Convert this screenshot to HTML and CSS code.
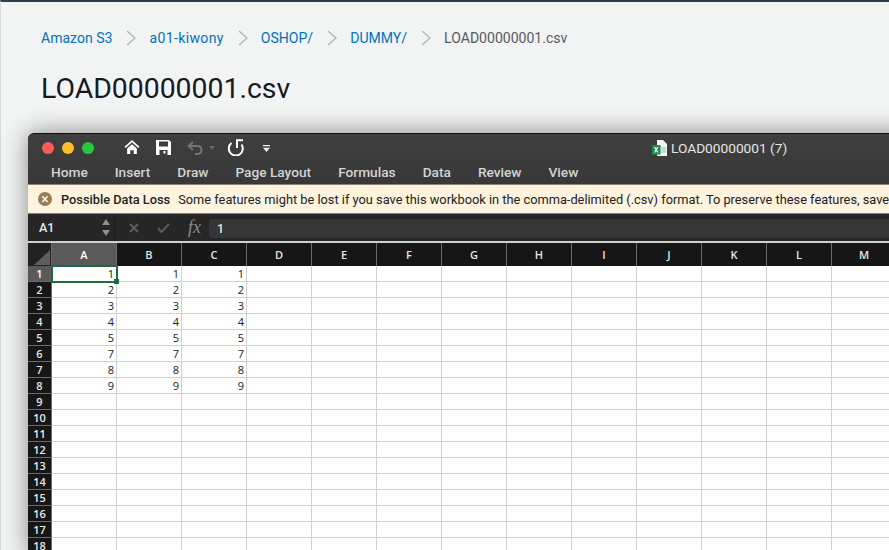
FILE: index.html
```html
<!DOCTYPE html>
<html lang="en">
<head>
  <meta charset="UTF-8" />
  <title>LOAD00000001.csv</title>
  <link rel="stylesheet" href="styles.css">
</head>
<body>

  <div class="page">
    <nav class="crumbs">
      <a href="#">Amazon S3</a>
      <svg class="sep" viewBox="0 0 10 16"><path d="M1 1l8 7-8 7"/></svg>
      <a class="bucket" href="#">a01-kiwony</a>
      <svg class="sep" viewBox="0 0 10 16"><path d="M1 1l8 7-8 7"/></svg>
      <a href="#">OSHOP/</a>
      <svg class="sep" viewBox="0 0 10 16"><path d="M1 1l8 7-8 7"/></svg>
      <a href="#">DUMMY/</a>
      <svg class="sep" viewBox="0 0 10 16"><path d="M1 1l8 7-8 7"/></svg>
      <span>LOAD00000001.csv</span>
    </nav>
    <h1>LOAD00000001.csv</h1>

    <div class="window">
      <div class="titlebar">
        <div class="lights">
          <i class="red"></i><i class="yellow"></i><i class="green"></i>
        </div>
        <div class="quick">
          <svg class="qa-home" viewBox="0 0 16 15"><path d="M8 0L0 7.200l1.200 1.300L8 2.400l6.800 6.100L16 7.200z"/><path d="M2.800 9.200L8 4.500l5.200 4.700V15H9.800v-4H6.200v4H2.800z"/></svg>
          <svg class="qa-save" viewBox="0 0 15 15"><path fill-rule="evenodd" d="M0 0h13l2 2v13H0zM3 1.500V6.500h9V1.500zM3.500 10V15h8v-5zM7.500 11h2v2.500h-2z"/></svg>
          <svg class="qa-undo" viewBox="0 0 16 14"><path d="M6 1L1.500 5 6 9M2 5h8c3 0 4.500 2 4.500 4s-1.500 4-4.500 4H8"/></svg>
          <svg class="qa-caret" viewBox="0 0 6 4"><path d="M0 0h6L3 4z"/></svg>
          <svg class="qa-redo" viewBox="0 0 17 17"><path d="M4.500 4A7 7 0 1 0 14.500 5.500M10 9V1.200M9 1.200h7"/></svg>
          <svg class="qa-more" viewBox="0 0 8 8"><path d="M0 0h8v1.500H0zM0 3h8L4 8z"/></svg>
        </div>
        <div class="doc">
          <svg class="doc-icon" viewBox="0 0 15 16"><path fill="#f4f4f4" d="M5 0h6l4 4v12H5z"/><path fill="#9fdcc0" d="M9 7h5v6H9z" opacity=".7"/><path fill="#1f8a50" d="M0 5h8.500v9.500H0z"/><path fill="#fff" d="M2 7h1.300L4.200 8.500 5.100 7h1.300L5 9.700l1.400 2.800H5.100L4.200 11l-.9 1.500H2l1.400-2.800z"/></svg>
          <span>LOAD00000001 (7)</span>
        </div>
        <ul class="tabs">
          <li>Home</li>
          <li>Insert</li>
          <li>Draw</li>
          <li>Page Layout</li>
          <li>Formulas</li>
          <li>Data</li>
          <li>Review</li>
          <li>View</li>
        </ul>
      </div>

      <div class="notice">
        <span class="notice-icon">&times;</span>
        <b>Possible Data Loss</b>
        <span>Some features might be lost if you save this workbook in the comma-delimited (.csv) format. To preserve these features, save</span>
      </div>

      <div class="formula">
        <div class="namebox">
          <span>A1</span>
          <div class="stepper"><i class="up"></i><i class="down"></i></div>
        </div>
        <div class="fx-btns">
          <svg viewBox="0 0 10 10"><path d="M1 1l8 8M9 1l-8 8"/></svg>
          <svg viewBox="0 0 13 10"><path d="M1 5l3.500 4L12 1"/></svg>
          <em>fx</em>
        </div>
        <div class="fx-input">1</div>
      </div>

      <table class="sheet">
        <thead>
          <tr>
            <th class="corner"><div class="corner-mark"></div></th>
            <th class="on">A</th><th>B</th><th>C</th><th>D</th><th>E</th><th>F</th><th>G</th><th>H</th><th>I</th><th>J</th><th>K</th><th>L</th><th>M</th>
          </tr>
        </thead>
        <tbody>
          <tr><th class="on">1</th><td class="active">1<i class="handle"></i></td><td>1</td><td>1</td><td></td><td></td><td></td><td></td><td></td><td></td><td></td><td></td><td></td><td></td></tr>
          <tr><th>2</th><td>2</td><td>2</td><td>2</td><td></td><td></td><td></td><td></td><td></td><td></td><td></td><td></td><td></td><td></td></tr>
          <tr><th>3</th><td>3</td><td>3</td><td>3</td><td></td><td></td><td></td><td></td><td></td><td></td><td></td><td></td><td></td><td></td></tr>
          <tr><th>4</th><td>4</td><td>4</td><td>4</td><td></td><td></td><td></td><td></td><td></td><td></td><td></td><td></td><td></td><td></td></tr>
          <tr><th>5</th><td>5</td><td>5</td><td>5</td><td></td><td></td><td></td><td></td><td></td><td></td><td></td><td></td><td></td><td></td></tr>
          <tr><th>6</th><td>7</td><td>7</td><td>7</td><td></td><td></td><td></td><td></td><td></td><td></td><td></td><td></td><td></td><td></td></tr>
          <tr><th>7</th><td>8</td><td>8</td><td>8</td><td></td><td></td><td></td><td></td><td></td><td></td><td></td><td></td><td></td><td></td></tr>
          <tr><th>8</th><td>9</td><td>9</td><td>9</td><td></td><td></td><td></td><td></td><td></td><td></td><td></td><td></td><td></td><td></td></tr>
          <tr><th>9</th><td></td><td></td><td></td><td></td><td></td><td></td><td></td><td></td><td></td><td></td><td></td><td></td><td></td></tr>
          <tr><th>10</th><td></td><td></td><td></td><td></td><td></td><td></td><td></td><td></td><td></td><td></td><td></td><td></td><td></td></tr>
          <tr><th>11</th><td></td><td></td><td></td><td></td><td></td><td></td><td></td><td></td><td></td><td></td><td></td><td></td><td></td></tr>
          <tr><th>12</th><td></td><td></td><td></td><td></td><td></td><td></td><td></td><td></td><td></td><td></td><td></td><td></td><td></td></tr>
          <tr><th>13</th><td></td><td></td><td></td><td></td><td></td><td></td><td></td><td></td><td></td><td></td><td></td><td></td><td></td></tr>
          <tr><th>14</th><td></td><td></td><td></td><td></td><td></td><td></td><td></td><td></td><td></td><td></td><td></td><td></td><td></td></tr>
          <tr><th>15</th><td></td><td></td><td></td><td></td><td></td><td></td><td></td><td></td><td></td><td></td><td></td><td></td><td></td></tr>
          <tr><th>16</th><td></td><td></td><td></td><td></td><td></td><td></td><td></td><td></td><td></td><td></td><td></td><td></td><td></td></tr>
          <tr><th>17</th><td></td><td></td><td></td><td></td><td></td><td></td><td></td><td></td><td></td><td></td><td></td><td></td><td></td></tr>
          <tr><th>18</th><td></td><td></td><td></td><td></td><td></td><td></td><td></td><td></td><td></td><td></td><td></td><td></td><td></td></tr>
        </tbody>
      </table>
    </div>
  </div>

</body>
</html>
```

FILE: styles.css
```css
html, body {
  margin: 0;
  padding: 0;
  height: 100%;
  overflow: hidden;
}

body {
  font-family: "Roboto", Arial, sans-serif;
  background: #f2f3f3;
}

.page {
  height: 548px;
  border-top: 2px solid #2f3d4c;
  border-left: 1px solid #d5dbdb;
  padding: 0 0 0 27px;
  overflow: hidden;
}

.crumbs {
  display: flex;
  align-items: center;
  height: 20px;
  margin: 26px 0 0 13px;
  font-size: 14.050px;
  color: #545b64;
}

.crumbs a {
  color: #0073bb;
  text-decoration: none;
}

.crumbs .bucket {
  letter-spacing: 0.35px;
}

.sep {
  width: 10px;
  height: 16px;
  margin: 0 13px 0 14px;
  fill: none;
  stroke: #aab7b8;
  stroke-width: 1.300;
}

h1 {
  margin: 21px 0 0 13px;
  height: 40px;
  font-size: 28.400px;
  line-height: 40px;
  font-weight: 400;
  color: #16191f;
}

.window {
  width: 900px;
  margin-top: 24px;
  border-radius: 6px 0 0 0;
  border-top: 1px solid #111;
  background: #383838;
  box-shadow: 0 0 24px rgba(0, 0, 0, 0.45);
  overflow: hidden;
  height: 420px;
}

/* title bar + ribbon tabs */
.titlebar {
  position: relative;
  height: 50px;
  background: linear-gradient(#3f3f3f, #383838);
}

.lights {
  position: absolute;
  top: 8px;
  left: 14px;
  display: flex;
  gap: 8px;
}

.lights i {
  width: 12px;
  height: 12px;
  border-radius: 50%;
}

.red { background: #fc5b57; }
.yellow { background: #fdbb2e; }
.green { background: #27c840; }

.quick svg {
  position: absolute;
}

.qa-home { left: 96px; top: 6px; width: 16px; height: 14px; fill: #fff; }
.qa-save { left: 128px; top: 6px; width: 15px; height: 15px; fill: #fff; }
.qa-undo { left: 159px; top: 7px; width: 16px; height: 14px; fill: none; stroke: #777; stroke-width: 1.800; }
.qa-caret { left: 181px; top: 12px; width: 6px; height: 4px; fill: #666; }
.qa-redo { left: 199px; top: 5px; width: 17px; height: 17px; fill: none; stroke: #fff; stroke-width: 2; }
.qa-more { left: 235px; top: 11px; width: 7px; height: 7px; fill: #eee; }

.doc {
  position: absolute;
  top: 6px;
  left: 624px;
  display: flex;
  align-items: center;
  gap: 4px;
  font-size: 13.700px;
  color: #e6e6e6;
}

.doc-icon {
  width: 15px;
  height: 16px;
}

.tabs {
  position: absolute;
  top: 30px;
  left: 23px;
  display: flex;
  gap: 27px;
  margin: 0;
  padding: 0;
  list-style: none;
  font-size: 13.700px;
  line-height: 16px;
  font-weight: 500;
  color: #d4d4d4;
}

/* yellow message bar */
.notice {
  display: flex;
  align-items: center;
  gap: 8px;
  height: 30px;
  padding-left: 10px;
  background: #fdf3df;
  border-top: 1px solid #8a8375;
  border-bottom: 1px solid #8a8375;
  box-sizing: border-box;
  font-size: 12.800px;
  color: #222;
  white-space: nowrap;
}

.notice b {
  font-weight: 500;
}

.notice-icon {
  flex: none;
  width: 14px;
  height: 14px;
  margin-right: 1px;
  border-radius: 50%;
  background: #9a7b4f;
  color: #fff;
  font-size: 14px;
  line-height: 14px;
  text-align: center;
}

/* formula bar */
.formula {
  display: flex;
  height: 27px;
  background: #262626;
  color: #e8e8e8;
  font-size: 12.500px;
  font-weight: 500;
}

.namebox {
  display: flex;
  align-items: center;
  justify-content: space-between;
  box-sizing: border-box;
  width: 87px;
  padding: 0 4px 0 11px;
  border-right: 1px solid #1c1c1c;
}

.stepper i {
  display: block;
  width: 0;
  height: 0;
  border-left: 4px solid transparent;
  border-right: 4px solid transparent;
}

.stepper .up { border-bottom: 6px solid #8f8f8f; margin-bottom: 5px; }
.stepper .down { border-top: 6px solid #8f8f8f; }

.fx-btns {
  display: flex;
  align-items: center;
  width: 94px;
  padding-left: 14px;
  box-sizing: border-box;
}

.fx-btns svg {
  fill: none;
  stroke: #5c5c5c;
  stroke-width: 2;
}

.fx-btns svg:nth-child(1) { width: 10px; height: 10px; margin-right: 18px; }
.fx-btns svg:nth-child(2) { width: 13px; height: 10px; margin-right: 18px; }

.fx-btns em {
  font-family: "Liberation Serif", serif;
  font-size: 18px;
  font-weight: 400;
  color: #8a8a8a;
}

.fx-input {
  flex: 1;
  margin: 5px 0 3px 0;
  padding-left: 8px;
  border-radius: 3px 0 0 3px;
  background: #363636;
  line-height: 19px;
}

/* grid */
.sheet {
  display: block;
  border-top: 2px solid #cfcfcf;
  border-collapse: separate;
  border-spacing: 0;
  table-layout: fixed;
  width: 869px;
  background: #fff;
  font-family: "Open Sans", "Noto Sans", sans-serif;
  font-size: 11px;
}

.sheet th {
  background: #161616;
  color: #e8e8e8;
  font-weight: 600;
  padding: 0;
  box-sizing: border-box;
  border-right: 1px solid #6a6a6a;
  border-bottom: 1px solid #6a6a6a;
}

.sheet thead th {
  width: 65px;
  height: 23px;
  border-bottom: 0;
}

.sheet tbody th {
  width: 24px;
  min-width: 24px;
  height: 16px;
  line-height: 15px;
}

.sheet .on {
  background: #5a5a5a;
  color: #fff;
}

.sheet .corner {
  width: 24px;
  min-width: 24px;
  background: #222;
  position: relative;
}

.corner-mark {
  position: absolute;
  right: 1px;
  bottom: 1px;
  border-left: 16px solid transparent;
  border-bottom: 15px solid #5e5e5e;
}

.sheet td {
  position: relative;
  box-sizing: border-box;
  width: 65px;
  min-width: 65px;
  height: 16px;
  padding: 0 2px 0 0;
  border-right: 1px solid #d0d0d0;
  border-bottom: 1px solid #d0d0d0;
  text-align: right;
  line-height: 15px;
  color: #222;
}

.sheet .active {
  z-index: 2;
  outline: 2px solid #1e6b41;
  outline-offset: -1px;
}

.handle {
  position: absolute;
  right: -3px;
  bottom: -3px;
  width: 5px;
  height: 5px;
  background: #1e6b41;
}
```
